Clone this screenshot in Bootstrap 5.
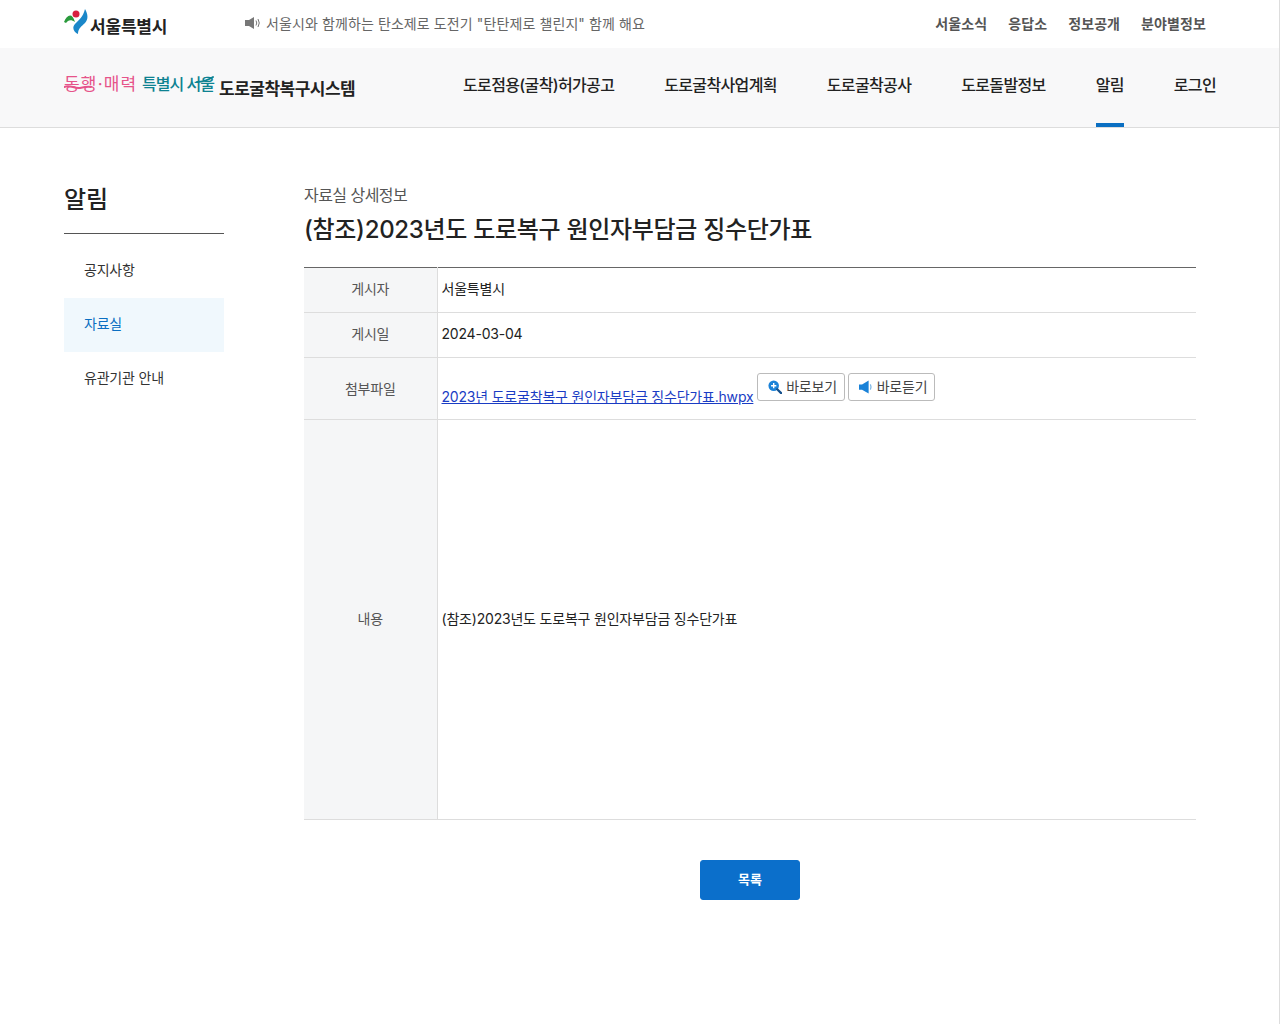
<!DOCTYPE html>
<html lang="ko">
<head>
  <meta charset="UTF-8">
  <meta name="viewport" content="width=device-width, initial-scale=1.0">
  <title>도로굴착복구시스템</title>
  <link href="https://cdn.jsdelivr.net/npm/bootstrap@5.3.3/dist/css/bootstrap.min.css" rel="stylesheet">
  <script src="https://cdn.jsdelivr.net/npm/bootstrap@5.3.3/dist/js/bootstrap.bundle.min.js"></script>
  <style>
    body {
      font-family: Inter, "Noto Sans CJK KR", sans-serif;
      color: #222;
      font-size: 14px;
      letter-spacing: -0.2px;
      border-right: 1px solid #ddd;
      min-height: 1024px;
    }
    .wrap { padding: 0 63px 0 64px; }
    .top-bar { height: 48px; }
    .seoul-logo { width: 181px; gap: 2px; }
    .seoul-logo svg { margin-top: -4px; }
    .seoul-logo span { font-size: 17px; font-weight: 700; color: #222; margin-top: 7px; letter-spacing: -0.2px; }
    .notice { color: #666; font-size: 14px; gap: 5px; letter-spacing: 0.1px; margin-top: -2px; }
    .top-links { gap: 21px; padding-right: 10px; margin-top: -2px; }
    .top-links a { color: #555; font-weight: 700; font-size: 14px; text-decoration: none; letter-spacing: 0.1px; }
    .main-bar { height: 80px; background: #f8f8f9; border-bottom: 1px solid #ddd; }
    .logo-box { position: relative; }
    .slogan { font-size: 17px; line-height: 1; width: 155px; white-space: nowrap; margin-top: -6px; }
    .slogan .pink { color: #e6538a; font-weight: 400; letter-spacing: 1.2px; }
    .slogan .teal { color: #0d8291; font-size: 16px; font-weight: 500; letter-spacing: -1px; }
    .swash { position: absolute; left: 0; top: -4px; }
    .sys-name { font-size: 17px; font-weight: 700; color: #222; margin-top: 4px; letter-spacing: -0.5px; }
    .main-nav { gap: 50px; }
    .main-nav a { position: relative; display: block; line-height: 75px; height: 79px; color: #222; font-size: 16px; font-weight: 500; text-decoration: none; letter-spacing: -0.65px; }
    .main-nav a.on::after { content: ""; position: absolute; left: 0; right: 0; bottom: 0; height: 4px; background: #0b6fc2; }
    .side { width: 160px; margin-right: 80px; padding-top: 52px; }
    .side h2 { font-size: 24px; font-weight: 500; margin: 0; border-bottom: 1px solid #555; height: 54px; line-height: 40px; color: #222; }
    .side .list-group { margin-top: 11px; }
    .side .list-group-item { border: 0; height: 54px; line-height: 50px; padding: 0 20px; font-size: 14px; color: #333; background: transparent; }
    .side .list-group-item.active { background: #f0f8fd; color: #0b6fc2; line-height: 51px; }
    .side .list-group-item.active + .list-group-item { line-height: 51px; }
    .content { width: 892px; padding-top: 54px; }
    .sub-title { font-size: 16px; color: #555; line-height: 26px; letter-spacing: -0.55px; }
    .doc-title { font-size: 24px; font-weight: 500; color: #222; line-height: 36px; margin: 4px 0 19px; letter-spacing: -0.3px; }
    .info { margin: 0; border-top: 1px solid #666; table-layout: fixed; }
    .info th, .info td { border-bottom: 1px solid #ddd; padding: 0 4px; vertical-align: middle; font-size: 14px; box-shadow: none; }
    .info th { width: 133px; background: #f5f6f7; color: #555; font-weight: 400; text-align: center; border-right: 1px solid #ddd; }
    .info td { color: #222; }
    .info .r1 { height: 45px; }
    .info .r1 th, .info .r1 td { padding-bottom: 3px; }
    .info .r3 { height: 62px; }
    .info .r3 td { padding-top: 2px; }
    .info .r4 { height: 400px; }
    .info .r4 th, .info .r4 td { padding-bottom: 2px; }
    .info a { color: #1a3cc4; }
    .view-btn { --bs-btn-padding-x: 7px; --bs-btn-padding-y: 0; --bs-btn-font-size: 14px; --bs-btn-border-color: #bbb; --bs-btn-border-radius: 3px; --bs-btn-color: #444; padding-left: 10px; height: 28px; line-height: 26px; gap: 4px; letter-spacing: -0.2px; vertical-align: 8px; }
    .view-btn + .view-btn { margin-left: -1px; }
    .list-btn { width: 100px; height: 40px; background: #0b6fcb; border-color: #0b6fcb; color: #fff; font-size: 13px; font-weight: 700; border-radius: 3px; margin-top: 40px; }
  </style>
</head>

<body>
  <div class="top-bar wrap d-flex align-items-center">
    <div class="seoul-logo d-flex align-items-center">
      <svg width="24" height="26" viewBox="0 0 24 26">
        <path d="M0 13 C3 6 8 3 11 13 C7 10 4 11 2 14 Z" fill="#2a9a3c"/>
        <circle cx="12" cy="5" r="3.5" fill="#d81f3f"/>
        <path d="M21 0 C24 5 24.5 10 21 14 C18 17 14 19 14 25 C10 23 7.5 19 11 15 C15 11 19 8 21 0 Z" fill="#1a87c9"/>
      </svg>
      <span>서울특별시</span>
    </div>
    <div class="notice d-flex align-items-center">
      <svg width="16" height="12" viewBox="0 0 16 12">
        <path d="M0 3 H4 L9 0 V12 L4 9 H0 Z" fill="#777"/>
        <path d="M11 3.5 Q12.5 6 11 8.5 M13 2 Q15.5 6 13 10" fill="none" stroke="#777" stroke-width="1"/>
      </svg>
      <span>서울시와 함께하는 탄소제로 도전기 "탄탄제로 챌린지" 함께 해요</span>
    </div>
    <div class="top-links d-flex ms-auto">
      <a href="#">서울소식</a>
      <a href="#">응답소</a>
      <a href="#">정보공개</a>
      <a href="#">분야별정보</a>
    </div>
  </div>

  <div class="main-bar wrap d-flex align-items-center justify-content-between">
    <div class="logo-box d-flex align-items-center">
      <div class="slogan"><span class="pink">동행·매력</span> <span class="teal">특별시 서울</span></div>
      <svg class="swash" width="155" height="30" viewBox="0 0 155 30">
        <path d="M0 18 C6 15 10 20 16 19 C20 18 24 17 27 18" fill="none" stroke="#e6538a" stroke-width="2" stroke-linecap="round"/>
        <path d="M133 13 C138 13 144 11 149 8" fill="none" stroke="#0d8291" stroke-width="2" stroke-linecap="round"/>
      </svg>
      <div class="sys-name">도로굴착복구시스템</div>
    </div>
    <nav class="main-nav d-flex">
      <a href="#">도로점용(굴착)허가공고</a>
      <a href="#">도로굴착사업계획</a>
      <a href="#">도로굴착공사</a>
      <a href="#">도로돌발정보</a>
      <a href="#" class="on">알림</a>
      <a href="#">로그인</a>
    </nav>
  </div>

  <div class="wrap d-flex">
    <aside class="side">
      <h2>알림</h2>
      <div class="list-group list-group-flush">
        <a href="#" class="list-group-item">공지사항</a>
        <a href="#" class="list-group-item active">자료실</a>
        <a href="#" class="list-group-item">유관기관 안내</a>
      </div>
    </aside>
    <main class="content">
      <div class="sub-title">자료실 상세정보</div>
      <h1 class="doc-title">(참조)2023년도 도로복구 원인자부담금 징수단가표</h1>
      <table class="table info">
        <tbody>
          <tr class="r1"><th>게시자</th><td>서울특별시</td></tr>
          <tr class="r1"><th>게시일</th><td>2024-03-04</td></tr>
          <tr class="r3">
            <th>첨부파일</th>
            <td>
              <a href="#">2023년 도로굴착복구 원인자부담금 징수단가표.hwpx</a>
              <button type="button" class="btn view-btn d-inline-flex align-items-center">
                <svg width="14" height="14" viewBox="0 0 16 16">
                  <circle cx="6.5" cy="6.5" r="6" fill="#1a82d8"/>
                  <path d="M10.5 10.5 L15 15" stroke="#14508c" stroke-width="2.6" stroke-linecap="round"/>
                  <path d="M3.5 6.5 H9.5 M6.5 3.5 V9.5" stroke="#fff" stroke-width="1.6"/>
                </svg>바로보기
              </button>
              <button type="button" class="btn view-btn d-inline-flex align-items-center">
                <svg width="14" height="14" viewBox="0 0 16 16">
                  <path d="M0 5 H3.5 L11 0.5 V15.5 L3.5 11 H0 Z" fill="#1a82d8"/>
                  <path d="M13 5 Q14.5 8 13 11" fill="none" stroke="#7fb8e6" stroke-width="1.4"/>
                </svg>바로듣기
              </button>
            </td>
          </tr>
          <tr class="r4"><th>내용</th><td>(참조)2023년도 도로복구 원인자부담금 징수단가표</td></tr>
        </tbody>
      </table>
      <div class="text-center">
        <button type="button" class="btn list-btn">목록</button>
      </div>
    </main>
  </div>
</body>

</html>
